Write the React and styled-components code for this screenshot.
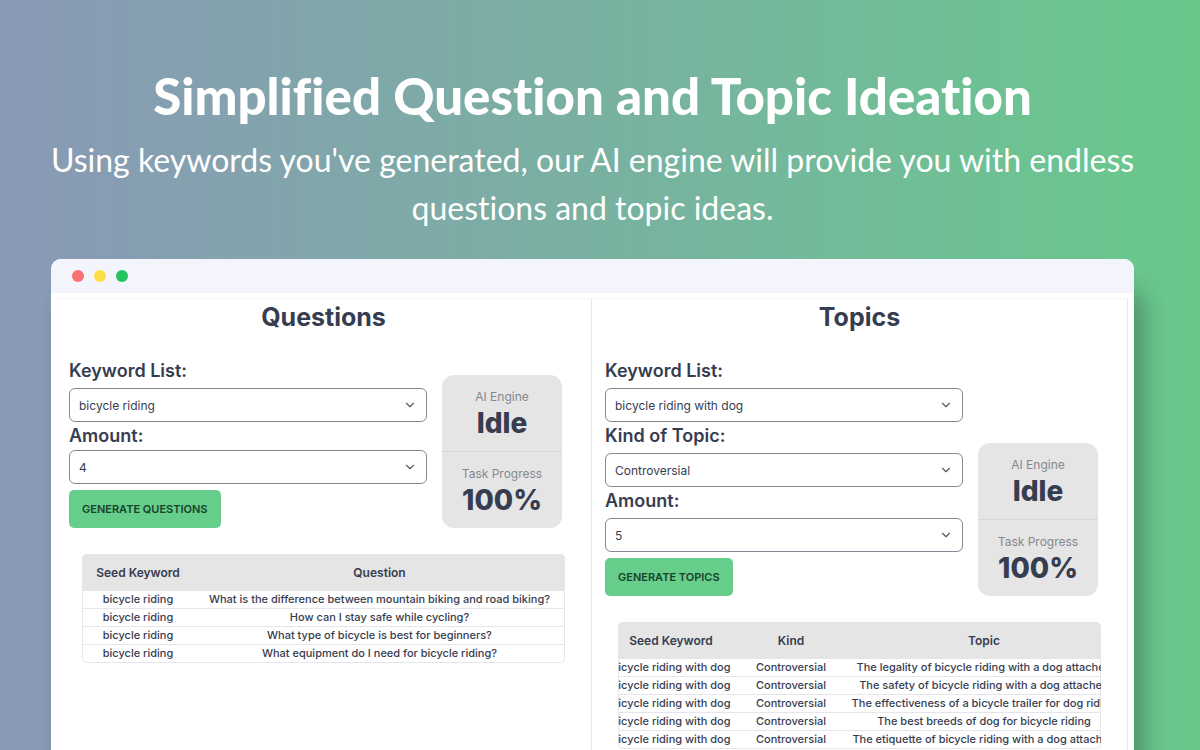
import React from 'react'
import styled, { createGlobalStyle } from 'styled-components'
import { ChevronDown } from 'lucide-react'

const GlobalStyle = createGlobalStyle`
  :root {
    --color-text: #373d50;
    --color-muted: #85878f;
    --color-primary: #66cd8a;
    --color-base: #e5e5e5;
    --color-bar: #f3f4fc;
    --color-line: #e5e6ec;
  }

  * {
    box-sizing: border-box;
  }

  body {
    margin: 0;
    color: var(--color-text);
    font-family: Inter, 'Liberation Sans', sans-serif;
  }
`

const Page = styled.main`
  display: flex;
  flex-direction: column;
  height: 100vh;
  overflow: hidden;
  padding: 72px 15px 0 0;
  background: linear-gradient(to right, #8a99b6, #68c98c);
`

const Hero = styled.header`
  color: white;
  font-family: Lato, sans-serif;
  font-variant-ligatures: no-common-ligatures;
  text-align: center;
  padding: 0 40px;
  margin-bottom: 27px;
`

const Title = styled.h1`
  margin: 0 0 16px;
  font-size: 51px;
  line-height: 48px;
  font-weight: 900;
`

const Subtitle = styled.p`
  margin: 0;
  font-size: 32px;
  line-height: 48px;
`

const Window = styled.section`
  display: flex;
  flex-direction: column;
  flex: 1 0 auto;
  margin: 0 51px;
  background: white;
  border-radius: 10px 10px 0 0;
  box-shadow: 12px 30px 26px -4px rgba(0, 0, 0, 0.3);
`

const WindowBar = styled.div`
  display: flex;
  align-items: center;
  gap: 10px;
  height: 34px;
  padding: 0 21px;
  background: var(--color-bar);
  border-radius: 10px 10px 0 0;
`

const Dot = styled.span`
  width: 12px;
  height: 12px;
  border-radius: 50%;
  background: ${props => props.$color};
`

const Columns = styled.div`
  display: grid;
  grid-template-columns: 1fr 1fr;
  flex: 1;
  padding: 5px 6px 0 5px;
`

const Column = styled.section`
  min-width: 0;
  border-top: 1px solid #f7f7fa;
  border-right: 1px solid var(--color-line);
`

const Heading = styled.h2`
  margin: 0 0 22px;
  font-size: 25px;
  line-height: 36px;
  font-weight: 700;
  text-align: center;
`

const Controls = styled.div`
  display: flex;
  align-items: flex-end;
  gap: 15px;
  padding: 0 29px 0 13px;
`

const Form = styled.form`
  flex: 1;
`

const Field = styled.div`
  display: flex;
  flex-direction: column;
  gap: ${props => (props.$tight ? '0' : '3px')};
`

const Label = styled.label`
  font-size: 18px;
  line-height: 28px;
  font-weight: 600;
`

const SelectBox = styled.div`
  position: relative;

  svg {
    position: absolute;
    right: 10px;
    top: 10px;
    pointer-events: none;
  }
`

const Select = styled.select`
  display: block;
  appearance: none;
  width: 100%;
  height: 34px;
  padding: 0 30px 0 9px;
  border: 1px solid #868a97;
  border-radius: 6px;
  outline: none;
  background: white;
  color: inherit;
  font-family: inherit;
  font-size: 12px;
`

const SubmitButton = styled.button.attrs({ type: 'submit' })`
  display: block;
  height: 38px;
  margin-top: 6px;
  padding: 0 13px;
  border: none;
  border-radius: 5px;
  background: var(--color-primary);
  color: #17432a;
  font-family: inherit;
  font-size: 11px;
  font-weight: 600;
  text-transform: uppercase;
`

const Stats = styled.dl`
  width: 120px;
  margin: 0;
  border-radius: 12px;
  background: var(--color-base);
  text-align: center;
`

const Stat = styled.div`
  padding: 12px 0;

  & + & {
    border-top: 1px solid #d6d6d8;
  }
`

const StatTitle = styled.dt`
  color: var(--color-muted);
  font-size: 12px;
  line-height: 20px;
`

const StatValue = styled.dd`
  margin: 0;
  font-size: 28px;
  line-height: 32px;
  font-weight: 800;
`

const TableBox = styled.div`
  margin: 26px 26px 0;
  overflow: hidden;
  border-radius: 5px;
  box-shadow: inset 0 0 0 1px var(--color-line);
`

const Table = styled.table`
  width: ${props => (props.$wide ? '526px' : '100%')};
  margin-left: ${props => (props.$wide ? '-17px' : '0')};
  table-layout: fixed;
  border-collapse: separate;
  border-spacing: 0;
  text-align: center;
  white-space: nowrap;

  th {
    height: 37px;
    padding: 0;
    background: var(--color-base);
    font-size: 12px;
    font-weight: 600;
  }

  td {
    height: 18px;
    padding: 0;
    border-bottom: 1px solid var(--color-line);
    font-size: 11px;
    line-height: 17px;
    font-weight: 500;
  }
`

const questions = [
  'What is the difference between mountain biking and road biking?',
  'How can I stay safe while cycling?',
  'What type of bicycle is best for beginners?',
  'What equipment do I need for bicycle riding?',
]

const topics = [
  'The legality of bicycle riding with a dog attached',
  'The safety of bicycle riding with a dog attached',
  'The effectiveness of a bicycle trailer for dog riding',
  'The best breeds of dog for bicycle riding',
  'The etiquette of bicycle riding with a dog attached',
]

const SelectField = ({ id, label, value, tight }) => (
  <Field $tight={tight}>
    <Label htmlFor={id}>{label}</Label>
    <SelectBox>
      <Select id={id} defaultValue={value}>
        <option>{value}</option>
      </Select>
      <ChevronDown size={14} color="#555a68" strokeWidth={2} />
    </SelectBox>
  </Field>
)

const EngineStats = () => (
  <Stats>
    <Stat>
      <StatTitle>AI Engine</StatTitle>
      <StatValue>Idle</StatValue>
    </Stat>
    <Stat>
      <StatTitle>Task Progress</StatTitle>
      <StatValue>100%</StatValue>
    </Stat>
  </Stats>
)

const DataTable = ({ columns, rows, wide }) => (
  <TableBox>
    <Table $wide={wide}>
      <colgroup>
        {columns.map(column => (
          <col key={column.name} width={column.width} />
        ))}
      </colgroup>
      <thead>
        <tr>
          {columns.map(column => (
            <th key={column.name} scope="col">{column.name}</th>
          ))}
        </tr>
      </thead>
      <tbody>
        {rows.map(row => (
          <tr key={row[row.length - 1]}>
            {row.map(cell => (
              <td key={cell}>{cell}</td>
            ))}
          </tr>
        ))}
      </tbody>
    </Table>
  </TableBox>
)

class App extends React.Component {
  handleSubmit = event => {
    event.preventDefault()
  }

  render() {
    return (
      <Page>
        <GlobalStyle />
        <Hero>
          <Title>Simplified Question and Topic Ideation</Title>
          <Subtitle>
            Using keywords you've generated, our AI engine will provide you with endless
            questions and topic ideas.
          </Subtitle>
        </Hero>
        <Window>
          <WindowBar>
            <Dot $color="#f87171" />
            <Dot $color="#fcdf47" />
            <Dot $color="#22c55e" />
          </WindowBar>
          <Columns>
            <Column>
              <Heading>Questions</Heading>
              <Controls>
                <Form onSubmit={this.handleSubmit}>
                  <SelectField id="question-keywords" label="Keyword List:" value="bicycle riding" />
                  <SelectField id="question-amount" label="Amount:" value="4" tight />
                  <SubmitButton>Generate Questions</SubmitButton>
                </Form>
                <EngineStats />
              </Controls>
              <DataTable
                columns={[{ name: 'Seed Keyword', width: 112 }, { name: 'Question' }]}
                rows={questions.map(question => ['bicycle riding', question])}
              />
            </Column>
            <Column>
              <Heading>Topics</Heading>
              <Controls>
                <Form onSubmit={this.handleSubmit}>
                  <SelectField id="topic-keywords" label="Keyword List:" value="bicycle riding with dog" />
                  <SelectField id="topic-kind" label="Kind of Topic:" value="Controversial" />
                  <SelectField id="topic-amount" label="Amount:" value="5" />
                  <SubmitButton>Generate Topics</SubmitButton>
                </Form>
                <EngineStats />
              </Controls>
              <DataTable
                wide
                columns={[{ name: 'Seed Keyword', width: 140 }, { name: 'Kind', width: 100 }, { name: 'Topic' }]}
                rows={topics.map(topic => ['bicycle riding with dog', 'Controversial', topic])}
              />
            </Column>
          </Columns>
        </Window>
      </Page>
    )
  }
}

export default App
